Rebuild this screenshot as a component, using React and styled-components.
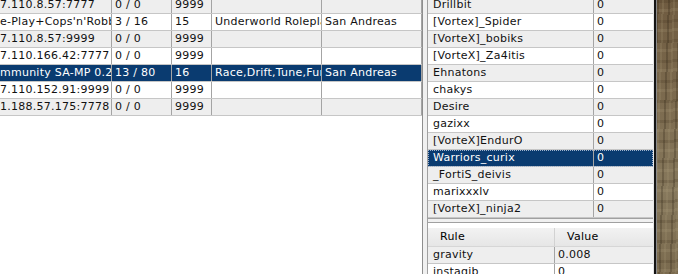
import React from 'react';
import styled, { createGlobalStyle } from 'styled-components';

const servers = [
	{ host: '7.110.8.57:7777', players: '0 / 0', ping: '9999' },
	{ host: "e-Play+Cops'n'Robbers", players: '3 / 16', ping: '15', mode: 'Underworld Roleplay', lang: 'San Andreas' },
	{ host: '7.110.8.57:9999', players: '0 / 0', ping: '9999' },
	{ host: '7.110.166.42:7777', players: '0 / 0', ping: '9999' },
	{ host: 'mmunity SA-MP 0.2', players: '13 / 80', ping: '16', mode: 'Race,Drift,Tune,Fun', lang: 'San Andreas', selected: true },
	{ host: '7.110.152.91:9999', players: '0 / 0', ping: '9999' },
	{ host: '1.188.57.175:7778', players: '0 / 0', ping: '9999' }
];

const players = [
	'Drillbit',
	'[Vortex]_Spider',
	'[VorteX]_bobiks',
	'[VorteX]_Za4itis',
	'Ehnatons',
	'chakys',
	'Desire',
	'gazixx',
	'[VorteX]EndurO',
	'Warriors_curix',
	'_FortiS_deivis',
	'marixxxlv',
	'[VorteX]_ninja2'
];

const rules = [
	{ name: 'gravity', value: '0.008' },
	{ name: 'instagib', value: '0' }
];

const App = () => {
	return (
		<Root>
			<GlobalStyle />
			<ServerPane>
				<Scroller>
					{ servers.map((s, i) => (
						<Row key={ i } alt={ i % 2 === 0 } selected={ s.selected }>
							<Cell width={ 112 } pad={ 0 }>{ s.host }</Cell>
							<Cell width={ 60 }>{ s.players }</Cell>
							<Cell width={ 40 }>{ s.ping }</Cell>
							<Cell width={ 110 }>{ s.mode }</Cell>
							<Cell width={ 100 }>{ s.lang }</Cell>
						</Row>
					)) }
				</Scroller>
			</ServerPane>
			<VSplitter />
			<SidePane>
				<PlayersBox>
					<Scroller>
						{ players.map((p, i) => (
							<Row key={ p } alt={ i % 2 === 0 } selected={ i === 9 } focused={ i === 9 }>
								<Cell width={ 166 } pad={ 5 }>{ p }</Cell>
								<Cell width={ 59 } last>0</Cell>
							</Row>
						)) }
					</Scroller>
				</PlayersBox>
				<HSplitter />
				<RulesBox>
					<Header>
						<HeaderCell width={ 127 }>Rule</HeaderCell>
						<HeaderCell width={ 98 } last>Value</HeaderCell>
					</Header>
					{ rules.map((r, i) => (
						<Row key={ r.name } alt={ i % 2 === 0 }>
							<Cell width={ 127 } pad={ 5 }>{ r.name }</Cell>
							<Cell width={ 98 } last>{ r.value }</Cell>
						</Row>
					)) }
				</RulesBox>
			</SidePane>
			<Frame />
			<Wallpaper />
		</Root>
	);
}

export default App;

const GlobalStyle = createGlobalStyle`
	html, body {
		margin: 0;
		padding: 0;
	}

	body {
		width: 678px;
		height: 274px;
		overflow: hidden;
		background: #fff;
		color: #000;
		font-family: "DejaVu Sans", Verdana, sans-serif;
		font-size: 11px;
		letter-spacing: 0.25px;
	}

	* {
		box-sizing: border-box;
	}
`;

const Root = styled.div`
	display: flex;
	width: 678px;
	height: 274px;
	overflow: hidden;
`;

const ServerPane = styled.div`
	width: 423px;
	height: 100%;
	overflow: hidden;
	background: #fff;
	border-right: 1px solid #8e8e8e;
`;

const Scroller = styled.div`
	margin-top: -3px;
`;

const Row = styled.div`
	display: flex;
	height: 17px;
	line-height: 16px;
	border-bottom: 1px solid #c6c6c6;
	white-space: nowrap;
	background: ${ ({ selected, alt }) => selected ? '#0a3b70' : alt ? '#eeeeee' : '#ffffff' };
	color: ${ ({ selected }) => selected ? '#fff' : '#111' };
	outline: ${ ({ focused }) => focused ? '1px dotted #9fb2cc' : 'none' };
	outline-offset: -1px;
`;

const Cell = styled.div`
	flex: none;
	width: ${ ({ width }) => width }px;
	padding-left: ${ ({ pad }) => pad === undefined ? 3 : pad }px;
	overflow: hidden;
	border-right: ${ ({ last }) => last ? 'none' : '1px solid #a4a4a4' };
`;

const VSplitter = styled.div`
	width: 4px;
	height: 100%;
	background: #f0f0f0;
`;

const SidePane = styled.div`
	display: flex;
	flex-direction: column;
	width: 226px;
	height: 100%;
	border-left: 1px solid #a0a0a0;
	background: #fff;
`;

const PlayersBox = styled.div`
	height: 219px;
	overflow: hidden;
	border-bottom: 1px solid #a0a0a0;
`;

const HSplitter = styled.div`
	height: 3px;
	background: #f0f0f0;
`;

const RulesBox = styled.div`
	flex: 1;
	overflow: hidden;
	padding-top: 5px;
	border-top: 1px solid #a0a0a0;
`;

const Header = styled.div`
	display: flex;
	height: 19px;
	line-height: 18px;
	background: linear-gradient(#f2f2f2, #e6e6e6);
	border-bottom: 1px solid #d6d6d6;
`;

const HeaderCell = styled.div`
	flex: none;
	width: ${ ({ width }) => width }px;
	padding-left: 12px;
	border-right: ${ ({ last }) => last ? 'none' : '1px solid #d2d2d2' };
`;

const Frame = styled.div`
	width: 4px;
	height: 100%;
	background: linear-gradient(to right, #e6e6e6 0 1px, #141414 1px 3px, #8a8a8a 3px 4px);
`;

const Wallpaper = styled.div`
	flex: 1;
	height: 100%;
	background:
		repeating-linear-gradient(92deg, rgba(40, 30, 15, 0.25) 0 2px, rgba(0, 0, 0, 0) 2px 5px, rgba(170, 155, 120, 0.2) 5px 7px, rgba(0, 0, 0, 0) 7px 11px),
		repeating-linear-gradient(178deg, rgba(60, 45, 25, 0.2) 0 3px, rgba(0, 0, 0, 0) 3px 9px, rgba(190, 175, 140, 0.15) 9px 12px, rgba(0, 0, 0, 0) 12px 20px),
		linear-gradient(180deg, #6f5b40 0%, #7d6c50 40%, #86785c 70%, #7a6a4e 100%);
`;
